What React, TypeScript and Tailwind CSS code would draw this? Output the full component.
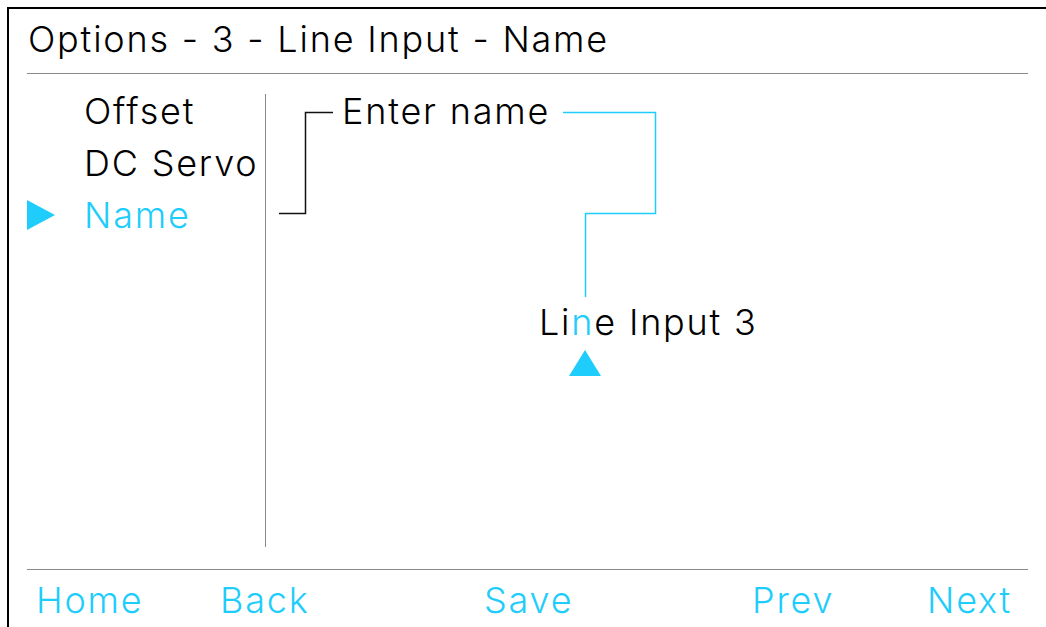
const CYAN = 'text-[#1fcdfc]';

function MenuItem({ label, active }: { label: string; active?: boolean }) {
    return (
        <div className="flex h-[52px] items-center">
            <div className="w-[57px]">
                {active && (
                    <svg width="28" height="30" viewBox="0 0 28 30">
                        <polygon points="0,0 28,15 0,30" fill="#1fcdfc" />
                    </svg>
                )}
            </div>
            <span className={active ? CYAN : 'text-black'}>{label}</span>
        </div>
    );
}

export default function App() {
    const buttons = [
        { label: 'Home', w: 'w-[184px]' },
        { label: 'Back', w: 'w-[264px]' },
        { label: 'Save', w: 'w-[268px]' },
        { label: 'Prev', w: 'w-[175px]' },
        { label: 'Next', w: 'w-[100px]' },
    ];

    return (
        <div
            className="h-[627px] w-[1046px] overflow-hidden bg-white text-[36px] font-light leading-none tracking-[1.8px]"
            style={{ fontFamily: 'Inter, "Noto Sans", sans-serif' }}
        >
            <div className="ml-[7px] mt-[7px] h-[700px] w-[1100px] border-2 border-black pl-[18px]">
                <div className="w-[1001px]">
                    {/* header */}
                    <div className="flex h-[65px] items-center border-b border-[#8a8a8a] pl-px pb-[4px]">
                        Options - 3 - Line Input - Name
                    </div>

                    {/* main */}
                    <div className="relative flex h-[495px]">
                        <div className="mt-[20px] h-[453px] w-[239px] border-r border-[#8a8a8a]">
                            <div className="-mt-[9px]">
                                <MenuItem label="Offset" />
                                <MenuItem label="DC Servo" />
                                <MenuItem label="Name" active />
                            </div>
                        </div>

                        <div className="flex-1 pl-[76px]">
                            <div className="mt-[19px] h-[36px] leading-[36px]">Enter name</div>
                            <div className="ml-[197px] mt-[175px] h-[36px] leading-[36px]">
                                Li<span className={CYAN}>n</span>e Input 3
                            </div>
                            <div className="ml-[227px] mt-[10px]">
                                <svg width="32" height="26" viewBox="0 0 32 26">
                                    <polygon points="16,0 32,26 0,26" fill="#1fcdfc" />
                                </svg>
                            </div>
                        </div>

                        <svg className="pointer-events-none absolute left-0 top-0" width="1001" height="495">
                            <path d="M252 139.5 H278.5 V38.5 H306" fill="none" stroke="#111" strokeWidth="1.5" />
                            <path d="M536 38.5 H628.5 V139.5 H558.5 V223" fill="none" stroke="#1fcdfc" strokeWidth="1.5" />
                        </svg>
                    </div>

                    {/* footer */}
                    <div className={`flex h-[60px] items-center border-t border-[#8a8a8a] pl-[9px] ${CYAN}`}>
                        {buttons.map((b) => (
                            <div key={b.label} className={b.w}>
                                {b.label}
                            </div>
                        ))}
                    </div>
                </div>
            </div>
        </div>
    );
}
